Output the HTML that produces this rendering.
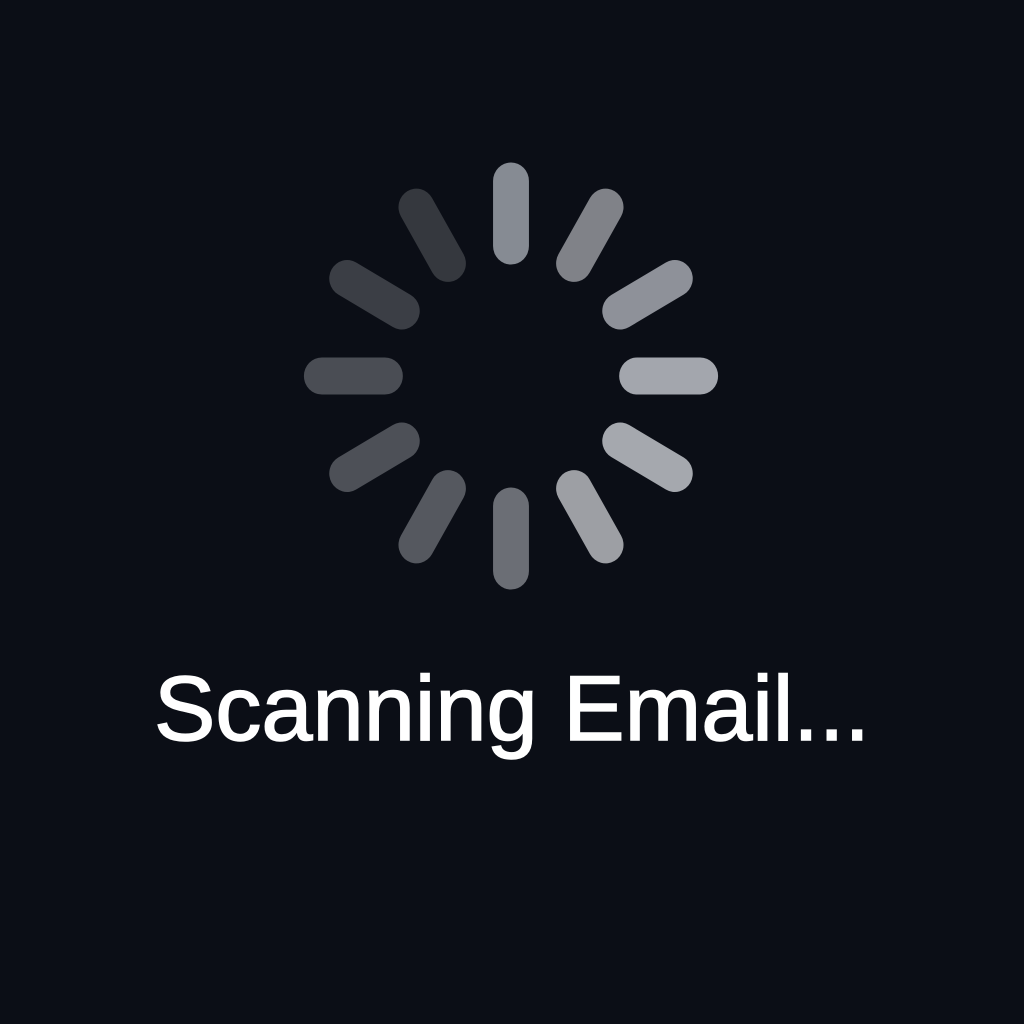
<!DOCTYPE html>
<html><head><meta charset="utf-8"><style>
html,body{margin:0;padding:0;background:#0b0e16;width:1024px;height:1024px;overflow:hidden}
svg{position:absolute;left:0;top:0}
.t{position:absolute;left:0;width:1024px;top:657px;text-align:center;color:#fff;font-family:"Liberation Sans",sans-serif;font-size:92px;-webkit-text-stroke:1.5px #fff;letter-spacing:0px;white-space:nowrap}
</style></head><body>
<svg width="1024" height="1024" viewBox="0 0 1024 1024">
<g transform="translate(511,376) scale(0.97,1)" stroke-linecap="round" stroke-width="37">
<line x1="0" y1="-195" x2="0" y2="-130" stroke="#868b93"/>
<line x1="0" y1="-195" x2="0" y2="-130" stroke="#808288" transform="rotate(30)"/>
<line x1="0" y1="-195" x2="0" y2="-130" stroke="#8e9199" transform="rotate(60)"/>
<line x1="0" y1="-195" x2="0" y2="-130" stroke="#a3a6ad" transform="rotate(90)"/>
<line x1="0" y1="-195" x2="0" y2="-130" stroke="#a5a8ae" transform="rotate(120)"/>
<line x1="0" y1="-195" x2="0" y2="-130" stroke="#9d9fa4" transform="rotate(150)"/>
<line x1="0" y1="-195" x2="0" y2="-130" stroke="#6b6e75" transform="rotate(180)"/>
<line x1="0" y1="-195" x2="0" y2="-130" stroke="#55585f" transform="rotate(210)"/>
<line x1="0" y1="-195" x2="0" y2="-130" stroke="#4d5057" transform="rotate(240)"/>
<line x1="0" y1="-195" x2="0" y2="-130" stroke="#4a4d54" transform="rotate(270)"/>
<line x1="0" y1="-195" x2="0" y2="-130" stroke="#3b3e45" transform="rotate(300)"/>
<line x1="0" y1="-195" x2="0" y2="-130" stroke="#35383e" transform="rotate(330)"/>
</g>
</svg>
<div class="t">Scanning Email...</div>
</body></html>
